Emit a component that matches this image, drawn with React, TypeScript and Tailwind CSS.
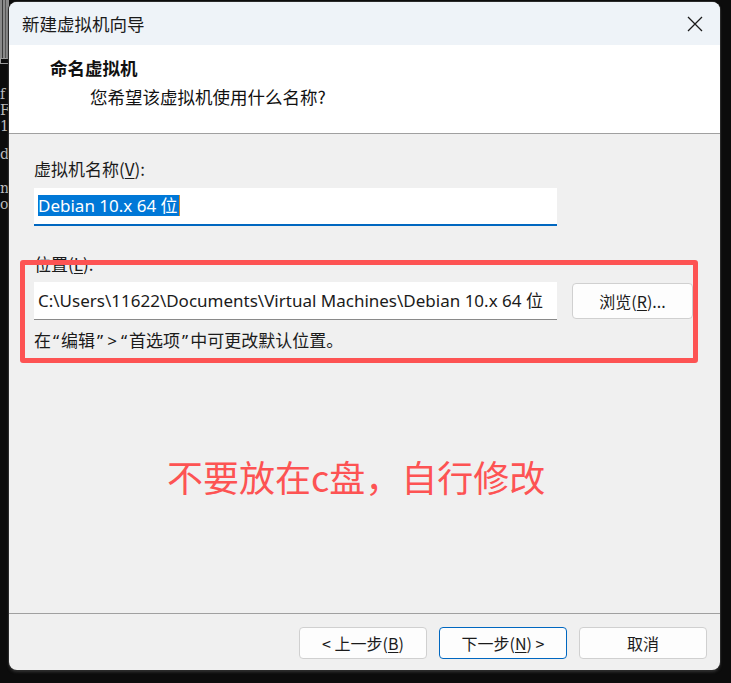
import React from "react";

const cjk = { fontFamily: '"Noto Sans CJK SC", "Noto Sans", sans-serif' };
const ui = { fontFamily: '"Noto Sans", "Noto Sans CJK SC", sans-serif' };

function Btn({ children, primary }: { children: React.ReactNode; primary?: boolean }) {
  return (
    <div
      className={`w-[128px] h-[32px] flex items-center justify-center rounded-[4px] bg-[#fdfdfd] text-[16px] text-[#1b1b1b] border ${
        primary ? "border-[#0067c0]" : "border-[#d0d0d0]"
      }`}
      style={cjk}
    >
      {children}
    </div>
  );
}

function Q({ c }: { c: string }) {
  return (
    <span className="inline-block px-[2px]" style={ui}>
      {c}
    </span>
  );
}

export default function App() {
  return (
    <div className="relative w-[731px] h-[683px] bg-[#0c0c0c] overflow-hidden pl-[9px] pt-[2px]">
      {/* desktop behind */}
      <div className="absolute left-0 top-0 w-[9px] h-[58px] bg-[#8a8a8a] flex gap-[2px] pl-[2px]">
        <div className="w-[1px] h-full bg-[#3a3a3a]" />
        <div className="w-[1px] h-full bg-[#555]" />
      </div>
      <div className="absolute left-0 top-[58px] w-[9px] h-[6px] border border-[#9a9a9a]" />
      <div
        className="absolute left-0 top-[86px] text-[14px] leading-[16px] text-[#bdbdbd] flex flex-col"
        style={{ fontFamily: '"DejaVu Serif", serif' }}
      >
        <span>f</span>
        <span>F</span>
        <span>1</span>
        <span className="mt-[12px]">di</span>
        <span className="mt-[18px]">n,</span>
        <span>om</span>
      </div>

      {/* window */}
      <div className="relative z-10 w-[711px] h-[668px] rounded-[8px] overflow-hidden flex flex-col bg-[#f0f0f0] shadow-[0_0_0_1px_#2a2a2a,0_2px_3px_#333]">
        {/* title bar */}
        <div className="h-[43px] shrink-0 bg-[#eef3f8] flex items-center justify-between pl-[13px] pr-[17px]">
          <span className="text-[17.5px] text-[#1a1a1a] leading-none" style={cjk}>
            新建虚拟机向导
          </span>
          <svg width="16" height="16" viewBox="0 0 16 16">
            <path d="M1 1 L15 15 M15 1 L1 15" stroke="#1a1a1a" strokeWidth="1.3" fill="none" />
          </svg>
        </div>

        {/* header */}
        <div className="h-[89px] shrink-0 bg-white border-b border-[#a0a0a0] flex flex-col" style={cjk}>
          <div className="mt-[11px] ml-[41px] text-[17.5px] font-bold leading-[24px] text-[#111]">命名虚拟机</div>
          <div className="mt-[5px] ml-[81px] text-[17.5px] leading-[24px] text-[#111]">您希望该虚拟机使用什么名称?</div>
        </div>

        {/* body */}
        <div className="relative h-[479px] shrink-0 flex flex-col pl-[25px]">
          <div className="mt-[23px] text-[17px] leading-[24px] text-[#1b1b1b]" style={cjk}>
            虚拟机名称(<span className="underline underline-offset-2">V</span>):
          </div>
          <div className="mt-[7px] w-[523px] h-[38px] bg-white border-b-2 border-[#0067c0] flex items-center pl-[4px] pb-[2px]">
            <span className="bg-[#0078d7] text-white text-[17px] leading-[21px] pr-[1px]" style={ui}>
              Debian 10.x 64 位
            </span>
            <span className="w-[1px] h-[21px] bg-[#d98b2b]" />
          </div>

          <div className="mt-[26px] text-[17px] leading-[24px] text-[#1b1b1b]" style={cjk}>
            位置(<span className="underline underline-offset-2">L</span>):
          </div>
          <div className="mt-[6px] flex items-center h-[38px]">
            <div className="w-[523px] h-[38px] bg-white border-b border-[#8a8a8a] flex items-center pl-[4px]">
              <span className="text-[17px] text-[#1b1b1b] whitespace-nowrap" style={ui}>
                C:\Users\11622\Documents\Virtual Machines\Debian 10.x 64 位
              </span>
            </div>
            <div
              className="ml-[15px] w-[121px] h-[36px] bg-[#fdfdfd] border border-[#d0d0d0] rounded-[4px] flex items-center justify-center text-[16px] text-[#1b1b1b]"
              style={cjk}
            >
              浏览(<span className="underline underline-offset-2">R</span>)...
            </div>
          </div>
          <div className="mt-[8px] text-[17px] leading-[24px] text-[#1b1b1b] whitespace-nowrap" style={cjk}>
            在<Q c="“" />编辑<Q c="”" />
            <Q c=">" />
            <Q c="“" />首选项<Q c="”" />中可更改默认位置。
          </div>

          <div className="mt-[99px] ml-[133px] text-[36px] leading-[48px] text-[#fd5353]" style={cjk}>
            不要放在c盘，自行修改
          </div>

          {/* annotation box */}
          <div className="absolute left-[11px] top-[126px] w-[678px] h-[103px] border-[5px] border-[#fd5353] rounded-[3px]" />
        </div>

        {/* footer */}
        <div className="flex-1 border-t border-[#a0a0a0] flex justify-end gap-[12px] pt-[13px] pr-[13px]">
          <Btn>
            &lt; 上一步(<span className="underline underline-offset-2">B</span>)
          </Btn>
          <Btn primary>
            下一步(<span className="underline underline-offset-2">N</span>) &gt;
          </Btn>
          <Btn>取消</Btn>
        </div>
      </div>
    </div>
  );
}
